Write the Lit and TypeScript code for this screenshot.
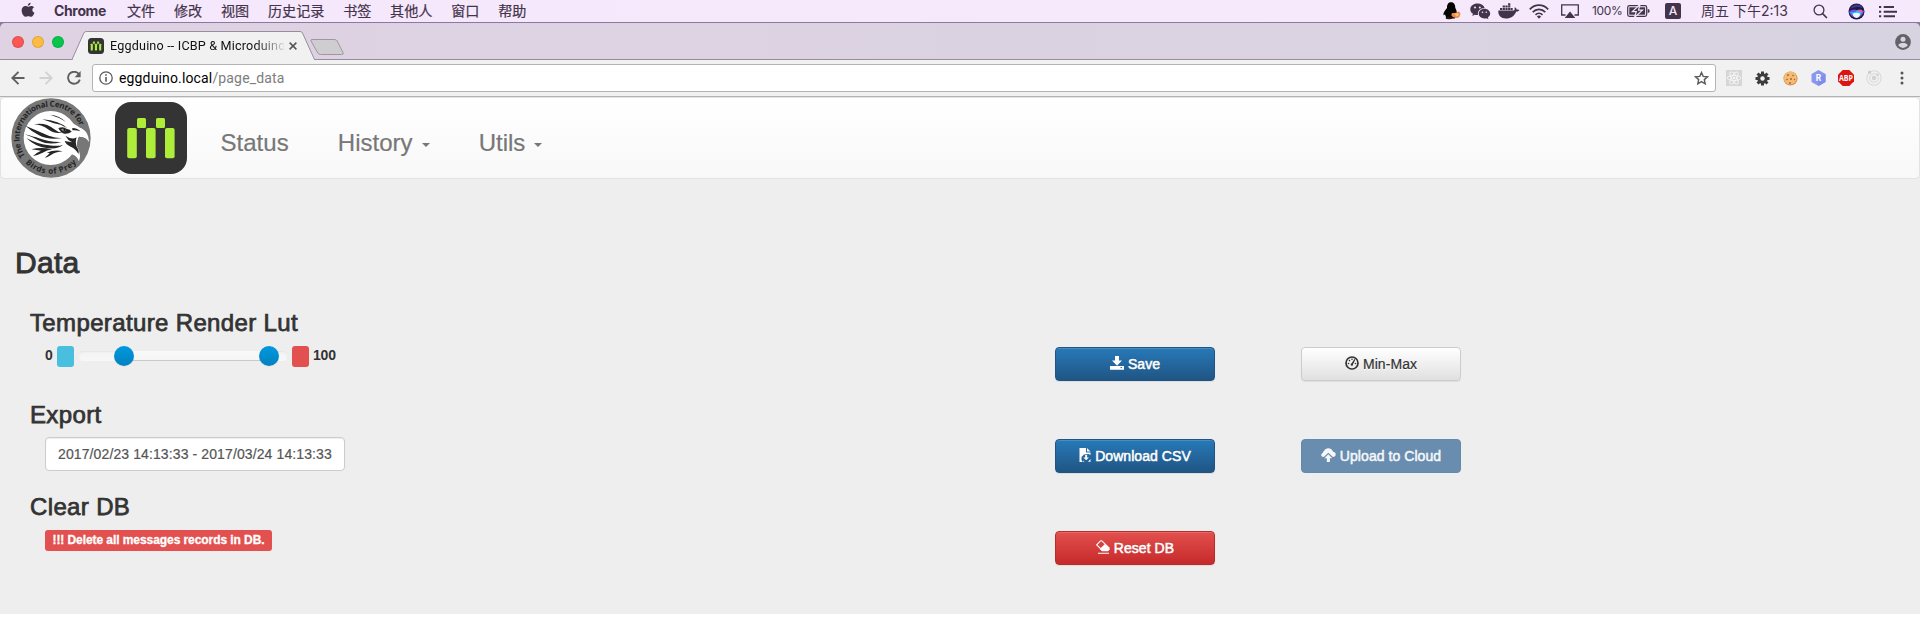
import { LitElement, html, css, svg } from "lit";
import { customElement } from "lit/decorators.js";

const apple = svg`<svg width="14" height="17" viewBox="0 0 13 17" preserveAspectRatio="none"><path fill="#43344b" d="M8.900.8c.1 1.700-1.200 3-2.600 3C6.200 2.200 7.400 1 8.900.8zM6.600 4.700c.7 0 1.500-.8 2.800-.8 1 0 2 .5 2.700 1.400-2.300 1.500-1.900 4.500.4 5.500-.6 1.900-1.900 4-3.200 4-.9 0-1.300-.6-2.500-.6s-1.700.6-2.500.6C2.500 14.800.6 11.500.6 8.600c0-3 1.700-4.600 3.500-4.600 1.100 0 1.900.7 2.500.7z"/></svg>`;

const penguin = svg`<svg width="18" height="18" viewBox="0 0 18 18"><path fill="#050505" d="M4 6C4 2 5.500.3 8 .3S12.300 2 12.300 6c1.300 2 1.600 4 1.500 6l-2 4.500H3.500L2 12.500l-1.600.8C.2 10.300 2 8.500 4 6z"/><ellipse cx="6" cy="16" rx="3.300" ry="1.200" fill="#26170c"/><path fill="#ed8a43" d="M9 11q4 .4 7-1.800l1.500 2.500q-.5 3.500-3 4.300l-4.500-.8-1.700-2z"/><path fill="#f9bd80" d="M11 12l4-1 1 2-2 1.500z"/></svg>`;

const wechat = svg`<svg width="21" height="17" viewBox="0 0 21 17"><g fill="#43344b"><path d="M7.500.5C3.300.5.300 3 .300 6.200c0 2 1 3.500 2.700 4.600l-.7 2.200 2.500-1.300c1 .3 2 .4 3.200.3-.8-4 2.200-7 6.600-7C13.800 2.200 11 .5 7.500.5z"/><path d="M14.400 5.700c-3.300 0-5.700 2.200-5.700 4.900 0 2.800 2.500 4.900 5.700 4.900.8 0 1.400-.1 2-.3l2.100 1.100-.6-1.800c1.400-1 2.300-2.300 2.300-3.900 0-2.700-2.500-4.900-5.800-4.900z"/></g><g fill="#f4e8fa"><circle cx="5" cy="4.500" r="1"/><circle cx="9.800" cy="4.500" r="1"/><circle cx="12.500" cy="9.300" r=".8"/><circle cx="16.300" cy="9.300" r=".8"/></g></svg>`;

const docker = svg`<svg width="22" height="16" viewBox="0 0 22 16"><g fill="#43344b"><path d="M.3 7.600h15.400c.9-.2 1.300-1 .8-2.600l.5-.8c1 .7 1.600 1.500 1.700 2.400 1-.2 2 0 2.700.4-.6 1.200-1.700 1.700-3.300 1.700C16.500 12.800 13 15.500 8 15.500 3 15.500 0 13 .3 7.600z"/><path d="M2 5h2.200v2H2zM4.700 5h2.200v2H4.700zM7.400 5h2.200v2H7.400zM10.100 5h2.200v2h-2.200zM12.700 5h2v2h-2zM4.700 2.600h2.200v2H4.700zM7.400 2.600h2.200v2H7.400zM10.100 2.600h2.200v2h-2.200zM10.100.2h2.200v2h-2.200z"/></g></svg>`;

const wifi = svg`<svg width="20" height="15" viewBox="0 0 20 15"><g fill="none" stroke="#43344b" stroke-width="1.700"><path d="M.8 5.300C6-.3 14-.3 19.200 5.300M3.700 8.100c3.600-3.700 9-3.700 12.600 0M6.500 10.900c2-2 5-2 7 0"/></g><path fill="#43344b" d="M7.900 12.500q2.100-1.800 4.200 0L10 14.700z"/></svg>`;

const airplay = svg`<svg width="18" height="15" viewBox="0 0 18 15"><path fill="none" stroke="#43344b" stroke-width="1.300" d="M4.500 11H.7V.8h16.600V11h-3.800"/><path fill="#43344b" d="M9 7.500l5.300 6.600H3.700z"/></svg>`;

const battery = svg`<svg width="23" height="14" viewBox="0 0 23 14"><rect x=".7" y="1.700" width="19" height="10.600" rx="1.800" fill="none" stroke="#43344b" stroke-width="1.200"/><rect x="2.300" y="3.300" width="15.800" height="7.400" fill="#43344b"/><path fill="#43344b" d="M20.700 5q2 0 2 2t-2 2z"/><path fill="#43344b" stroke="#f4e8fa" stroke-width="1.200" d="M13 .5L5.300 7.600h4L7.500 13.500l8-7.300h-4z"/></svg>`;

const glass = svg`<svg width="15" height="15" viewBox="0 0 15 15"><circle cx="6" cy="6" r="4.900" fill="none" stroke="#43344b" stroke-width="1.300"/><path d="M9.600 9.600l4.300 4.400" stroke="#43344b" stroke-width="1.600"/></svg>`;

const siri = svg`<svg width="17" height="17" viewBox="0 0 17 17"><circle cx="8.500" cy="8.500" r="8" fill="#1f1a3c"/><path d="M2.200 6Q4 1.500 9 1.500T14.500 5Q9 2.500 2.200 6z" fill="#3a3790"/><path d="M1 8.500q4-3 8-1.500t7 .5q-1 6-7 7.500Q2.500 15 1 8.500z" fill="#6a54e6"/><path d="M2 9.500q4 0 6-1 2-2.500 6.500.5-1 2-3.500 2-5 2-9-1.500z" fill="#25c6f3"/><path d="M9.500 7q3-1.200 5.500 1l-3 1.500z" fill="#ff4fae"/><path d="M4.500 11q4-2.500 8 0-1 3.500-4 4-3-.5-4-4z" fill="#eef6ff"/></svg>`;

const list = svg`<svg width="18" height="13" viewBox="0 0 18 13"><path fill="#43344b" d="M0 1h2.200v2H0zM0 5.700h2.200v2H0zM0 10.200h2.200v2H0zM4.700 1H15v2H4.700zM4.700 5.700H18v2H4.700zM4.700 10.200H16v2H4.700z"/></svg>`;

const person = svg`<svg width="16" height="16" viewBox="0 0 16 16"><circle cx="8" cy="8" r="7.900" fill="#646168"/><circle cx="8" cy="5.300" r="2.500" fill="#dad3e0"/><path d="M3.200 11.300C3.600 9.500 6 9 8 9s4.400.5 4.800 2.300Q11 14 8 14t-4.800-2.700z" fill="#dad3e0"/></svg>`;

const arrow = (color: string) => svg`<svg width="14" height="14" viewBox="0 0 14 14"><path fill="none" stroke="${color}" stroke-width="1.900" d="M13.500 7H1.800M7.500.8L1.300 7l6.200 6.200"/></svg>`;

const reload = svg`<svg width="14" height="14" viewBox="0 0 14 14"><path fill="none" stroke="#5f5f5f" stroke-width="1.900" d="M12 3.300A6 6 0 1 0 12.800 8.600"/><path fill="#5f5f5f" d="M13.600 0v6.200H7.600z"/></svg>`;

const info = svg`<svg width="14" height="14" viewBox="0 0 14 14"><circle cx="7" cy="7" r="6.200" fill="none" stroke="#5a5a5a" stroke-width="1.300"/><path fill="#5a5a5a" d="M6.200 3.200h1.600v1.600H6.200zM6.200 6h1.600v4.700H6.200z"/></svg>`;

const star = svg`<svg width="15" height="14" viewBox="0 0 15 14"><path fill="none" stroke="#5a5a5a" stroke-width="1.400" stroke-linejoin="miter" d="M7.500 1.500l1.700 3.900 4.300.4-3.200 2.800.9 4.200-3.700-2.200-3.700 2.200.9-4.200L1.500 5.800l4.300-.4z"/></svg>`;

const react = svg`<svg width="16" height="16" viewBox="0 0 16 16"><rect width="16" height="16" fill="#d6d6d6"/><g fill="none" stroke="#f5f5f5" stroke-width=".9"><ellipse cx="8" cy="8" rx="6.800" ry="2.600"/><ellipse cx="8" cy="8" rx="6.800" ry="2.600" transform="rotate(60 8 8)"/><ellipse cx="8" cy="8" rx="6.800" ry="2.600" transform="rotate(120 8 8)"/></g><circle cx="8" cy="8" r="1.300" fill="#f5f5f5"/></svg>`;

const gear = svg`<svg width="15" height="15" viewBox="-7.500 -7.500 15 15"><g fill="#3c3c3c">${[0, 45, 90, 135].map((a) => svg`<rect x="-1.500" y="-7" width="3" height="14" transform="rotate(${a})"/>`)}<circle r="5.200"/></g><circle r="2.200" fill="#f1f1f1"/></svg>`;

const cookie = svg`<svg width="15" height="15" viewBox="0 0 15 15"><circle cx="7.500" cy="7.500" r="7.100" fill="#d9974a"/><circle cx="7.300" cy="6.900" r="6.400" fill="#f3bb73"/><g fill="#9a622e"><circle cx="5" cy="4" r=".9"/><circle cx="10" cy="4.500" r=".8"/><circle cx="4" cy="8.500" r=".8"/><circle cx="8" cy="8" r=".9"/><circle cx="11.500" cy="8.500" r=".7"/><circle cx="7" cy="12" r=".9"/></g></svg>`;

const hexR = svg`<svg width="15" height="16" viewBox="0 0 15 16"><path d="M7.500 0l7 4v8l-7 4-7-4V4z" fill="#8b97ef"/><path d="M7.500 8l7-4v8l-7 4z" fill="#7f8cec"/><text x="7.500" y="11" text-anchor="middle" font-family="Roboto, sans-serif" font-weight="700" font-size="8.500" fill="#fff">R</text></svg>`;

const abp = svg`<svg width="16" height="16" viewBox="0 0 16 16"><path d="M4.700 0h6.600L16 4.700v6.600L11.300 16H4.700L0 11.300V4.700z" fill="#dc1512"/><text x="8" y="10.800" text-anchor="middle" textLength="14" lengthAdjust="spacingAndGlyphs" font-family="Open Sans, sans-serif" font-weight="700" font-size="8" fill="#fff">ABP</text></svg>`;

const orbit = svg`<svg width="16" height="16" viewBox="0 0 16 16"><g fill="none" stroke="#dadada" stroke-width="1.100"><circle cx="8" cy="8" r="7.200"/><circle cx="8" cy="8" r="4.300"/></g><circle cx="8" cy="8" r="2.200" fill="#d2d2d2"/><circle cx="3.500" cy="2.300" r="1.500" fill="#c8c8c8"/><circle cx="11.500" cy="4.800" r="1.200" fill="#d0d0d0"/></svg>`;

const dots = svg`<svg width="4" height="14" viewBox="0 0 4 14"><g fill="#555"><circle cx="2" cy="2" r="1.500"/><circle cx="2" cy="7" r="1.500"/><circle cx="2" cy="12" r="1.500"/></g></svg>`;

const mLogo = (size: number) => svg`<svg width="${size}" height="${size}" viewBox="0 0 72 72"><rect width="72" height="72" rx="16" fill="#343434"/><g fill="#aeee3a"><rect x="12.200" y="26" width="9.600" height="30.300" rx="2"/><rect x="31" y="26" width="9.600" height="30.300" rx="2"/><rect x="50" y="26" width="9.600" height="30.300" rx="2"/><rect x="22" y="16" width="9" height="10" rx="1.500"/><rect x="41" y="16" width="9" height="10" rx="1.500"/></g></svg>`;

const eagle = svg`<svg width="80" height="80" viewBox="9 6 240 240">
  <defs>
    <path id="arcTop" d="M51.900 179.800A94 94 0 1 1 222 114"/>
    <path id="arcBottom" d="M35 178A107.500 107.500 0 0 0 223 178"/>
  </defs>
  <circle cx="129" cy="126" r="119" fill="#777"/>
  <circle cx="128" cy="126" r="81" fill="#fff"/>
  <path fill="#fff" d="M150 70C185 74 202 86 216 95 232 101 242 113 243 138 238 128 229 123 213 122 208 130 205 142 208 153 216 161 220 178 213 196 207 181 198 176 180 172L120 160Z"/>
  <path fill="#777" d="M213 122q10 0 20 6v45l-18 18q4-18-7-38-3-12 5-31z"/>
  <g fill="#252525">
    <path d="M126 56q29 3 48 22-21-15-48-22z"/>
    <path d="M103 70q52 4 75 27-20-13-40-15-12-4-35-12z"/>
    <path d="M78 85q34-7 60 14 11 10 25 11-26 4-43-10-17-14-42-15z"/>
    <path d="M52 89q45 19 70 30 18 6 40 8-45 5-69-9-25-14-41-29z"/>
    <path d="M50 115q28 7 43 12 30 12 67 11-37 11-65-3-20-12-45-20z"/>
    <path d="M55 126q37 20 68 22 30 4 42-2-16 15-50 10-33-4-60-30z"/>
    <path d="M70 160q30-8 62 0-15 2-28 10-14 7-29 10 12-11 24-16-13-2-29-4z"/>
    <path d="M116 170q25-11 48-4-22 2-35 11-11 8-19 8 10-6 15-14z"/>
    <path d="M151 96q16-6 24 2 12 2 16 9-9 7-22 6-12-3-18-17z"/>
    <path d="M193 96q17 1 24 10-13-5-24-3z"/>
    <path d="M172 119q20 14 34 5-5 12 0 28 9 13 5 22-7-15-23-22-14-6-18-17l22 4q-13-7-20-20z"/>
  </g>
  <path d="M159 99q10-3 15 4-7 8-15-4z" fill="#999"/><circle cx="169" cy="102" r="3" fill="#111"/>
  <g font-family="Open Sans, sans-serif" font-weight="700" fill="#242424">
    <text font-size="24"><textPath href="#arcTop" textLength="316" lengthAdjust="spacing">The International Centre for</textPath></text>
    <text font-size="24"><textPath href="#arcBottom" startOffset="28" textLength="172" lengthAdjust="spacing">Birds of Prey</textPath></text>
  </g>
</svg>`;

const save = svg`<svg width="14" height="14" viewBox="0 0 14 14"><path fill="currentColor" d="M5 0h4v4.500h3L7 9.800 2 4.500h3zM0 10h14v3.700H0z"/><path d="M10.500 11.600h1.500" stroke="#22659b"/></svg>`;

const dash = svg`<svg width="14" height="14" viewBox="0 0 14 14"><circle cx="7" cy="7" r="6" fill="none" stroke="currentColor" stroke-width="1.700"/><g fill="currentColor"><circle cx="3.500" cy="7.500" r=".8"/><circle cx="4.500" cy="4.600" r=".8"/><circle cx="7" cy="3.300" r=".8"/><circle cx="10.500" cy="7.500" r=".8"/><path d="M9.500 3l.9.500L8 8.200a1.200 1.200 0 1 1-1.600-.8z"/></g></svg>`;

const saveFile = svg`<svg width="12" height="14" viewBox="0 0 12 14"><path fill="currentColor" d="M.5 0H7v4.500h4.500V7L9.500 6 5 6.500 2.500 9v3l1.200 2H.5z"/><path fill="currentColor" d="M8 0l3.500 3.600H8zM6.200 7h1.900v2.500h1.900L7.200 12.300 4.300 9.500h1.900zM4 12.500l1.500 1.200H4zM11.500 11v2.800H9z"/></svg>`;

const cloud = svg`<svg width="15" height="14" viewBox="0 0 15 14"><path fill="currentColor" d="M2.800 9L7.300 4.800 11.900 9c1.700-.1 2.800-1.200 2.800-2.600 0-1.500-1.200-2.700-2.700-2.600C11.500 1.700 9.500.3 7.400.3c-2 0-3.600 1-4.300 2.800C2.200 3.400 2 4 2 4.700.9 5.100.2 6 .2 7 .2 8.200 1.300 9.100 2.800 9z"/><path fill="currentColor" d="M7.300 6.300l4 4H8.900V14H5.800v-3.700H3.400z"/></svg>`;

const erase = svg`<svg width="14" height="14" viewBox="0 0 14 14"><path fill="none" stroke="currentColor" stroke-width="1.100" d="M4.800.7L.7 4.800 6.500 10.500h4L13.200 8 5.700.7z"/><path fill="currentColor" d="M8.700 4.200l5.300 5-2 2H6L3.700 9zM2 12.700h11v1.100H2z"/></svg>`;

@customElement("mac-menubar")
class MacMenubar extends LitElement {
  static styles = css`
    :host { display: flex; box-sizing: border-box; height: 23px; align-items: center; background: linear-gradient(90deg, #f6e8fc, #f5e9fb); border-bottom: 1px solid #8d78a3; color: #43344b; font: 14px/22px Inter, "Noto Sans CJK SC", sans-serif; white-space: nowrap; }
    svg { display: block; }
    :host > div, .status > div { flex: none; }
    .apple { margin: -2px 0 0 21px; width: 33px; }
    .app { font-weight: 700; width: 73px; letter-spacing: -.35px; }
    :host > .menus { display: flex; gap: 18.800px; flex: 1; font-size: 14.100px; -webkit-text-stroke: .2px; }
    .status { display: flex; align-items: center; }
    .penguin { width: 27px; } .wechat { width: 28px; } .docker { width: 31px; } .wifi { width: 32px; } .airplay { width: 31px; }
    .pct { width: 35px; font-size: 12px; letter-spacing: -.3px; }
    .battery { width: 38px; }
    .input { width: 16px; height: 16px; margin-right: 20px; border-radius: 2px; background: #43344b; color: #f4e8fa; font-size: 12px; font-weight: 500; line-height: 16px; text-align: center; }
    .clock { width: 112px; }
    .glass { width: 35px; } .siri { width: 31px; } .list { width: 41px; }
  `;
  render() {
    return html`<div class="apple">${apple}</div><div class="app">Chrome</div>
      <div class="menus">${["文件", "修改", "视图", "历史记录", "书签", "其他人", "窗口", "帮助"].map((m) => html`<span>${m}</span>`)}</div>
      <div class="status">
        <div class="penguin">${penguin}</div><div class="wechat">${wechat}</div><div class="docker">${docker}</div><div class="wifi">${wifi}</div><div class="airplay">${airplay}</div>
        <div class="pct">100%</div><div class="battery">${battery}</div><div class="input">A</div>
        <div class="clock">周五 下午2:13</div>
        <div class="glass">${glass}</div><div class="siri">${siri}</div><div class="list">${list}</div>
      </div>`;
  }
}

@customElement("browser-chrome")
class BrowserChrome extends LitElement {
  static styles = css`
    :host { display: block; font-family: Roboto, sans-serif; background: #8d78a3; }
    svg { display: block; flex: none; }
    .strip { display: flex; box-sizing: border-box; height: 37px; border-bottom: 1px solid #978d9e; border-radius: 5px 5px 0 0; background: linear-gradient(90deg, #dfd2e2, #d8d3e1); }
    .lights { display: flex; flex: none; box-sizing: border-box; gap: 8px; padding: 13px 0 0 12px; width: 72px; }
    .light { width: 12px; height: 12px; border-radius: 50%; box-sizing: border-box; border: .5px solid rgba(0,0,0,.12); flex: none; }
    .red { background: #fc5753; } .yellow { background: #fdbc40; } .green { background: #06c74c; }
    .tab { position: relative; flex: none; width: 244px; height: 37px; display: flex; align-items: center; padding: 9px 0 0 16px; box-sizing: border-box; }
    .shape { position: absolute; left: 0; top: 0; }
    .fav, .title, .close { position: relative; flex: none; }
    .title { width: 174px; margin-left: 6px; overflow: hidden; white-space: nowrap; font-size: 12.600px; line-height: 16px; color: #111; letter-spacing: .18px; -webkit-mask-image: linear-gradient(90deg, #000 145px, transparent 177px); }
    .close { margin-left: 5px; }
    .new { margin: 16px auto 0 -6px; }
    .person { padding: 11px 9px 0 0; }
    .toolbar { display: flex; align-items: center; box-sizing: border-box; height: 37px; background: #f1f1f1; border-bottom: 1px solid #b2b4b2; }
    .toolbar > div { flex: none; }
    .back { margin-left: 11px; width: 28px; } .fwd { width: 28px; transform-origin: 7px 7px; transform: scaleX(-1); } .reload { width: 25px; }
    .omni { display: flex; align-items: center; box-sizing: border-box; width: 1624px; height: 28px; padding: 0 6px; border: 1px solid #b3b4b3; border-radius: 3px; background: #fff; }
    .url { flex: 1; margin-left: 6px; font-size: 14px; line-height: 20px; color: #7d7d7d; letter-spacing: .150px; }
    .host { color: #000; }
    .exts { display: flex; align-items: center; margin-left: 4px; }
    .ext { width: 28px; display: flex; justify-content: center; }
  `;
  render() {
    return html`<div class="strip">
        <div class="lights"><span class="light red"></span><span class="light yellow"></span><span class="light green"></span></div>
        <div class="tab">
          <svg class="shape" width="244" height="37" viewBox="0 0 244 37"><path fill="#f2f1f2" stroke="#978d9e" d="M0 36.500L11.800 10q.8-1.500 2.500-1.500H228q1.700 0 2.500 1.500L242.500 36.500"/><path d="M1 36.500h241" stroke="#f2f1f2"/></svg>
          <span class="fav">${mLogo(16)}</span><span class="title">Eggduino -- ICBP &amp; Microduino</span>
          <svg class="close" width="8" height="8" viewBox="0 0 8 8"><path stroke="#555" stroke-width="1.500" d="M.6.6l6.800 6.800M7.400.6L.6 7.400"/></svg>
        </div>
        <svg class="new" width="35" height="17" viewBox="0 0 35 17"><path fill="#cfcdcf" stroke="#9f97a4" d="M2 .5h22.500q2 0 2.700 1.500l6 12q.6 1.500-1.500 1.500H10.500q-2 0-2.700-1.500L1 2Q.4.5 2 .5z"/></svg>
        <div class="person">${person}</div>
      </div>
      <div class="toolbar">
        <div class="back">${arrow("#5f5f5f")}</div><div class="fwd">${arrow("#d2d2d2")}</div><div class="reload">${reload}</div>
        <div class="omni">${info}<div class="url"><span class="host">eggduino.local</span>/page_data</div>${star}</div>
        <div class="exts">${[react, gear, cookie, hexR, abp, orbit, dots].map((i) => html`<div class="ext">${i}</div>`)}</div>
      </div>`;
  }
}

@customElement("site-nav")
class SiteNav extends LitElement {
  static styles = css`
    :host { display: flex; box-sizing: border-box; height: 82px; border: 1px solid #e3e3e3; border-radius: 4px; background: linear-gradient(#fff, #f8f8f8); color: #777; font: 24px/27px "Liberation Sans", sans-serif; }
    svg { display: block; }
    .brand { flex: none; padding: 0 0 0 10px; width: 114px; box-sizing: border-box; }
    .logo { flex: none; padding-top: 4px; width: 81px; }
    .link { padding: 31px 24.600px 0; display: flex; text-shadow: 0 1px 0 rgba(255,255,255,.25); -webkit-text-stroke: .2px; }
    .caret { margin: 14px 0 0 9px; width: 0; height: 0; border: 4px solid transparent; border-top-color: #777; border-bottom: 0; }
  `;
  render() {
    return html`<div class="brand">${eagle}</div><div class="logo">${mLogo(72)}</div>
      <div class="link">Status</div><div class="link">History<i class="caret"></i></div><div class="link">Utils<i class="caret"></i></div>`;
  }
}

@customElement("app-root")
class AppRoot extends LitElement {
  static styles = css`
    :host { display: block; height: 621px; overflow: hidden; background: #fff; color: #333; font: 14px/20px "Liberation Sans", sans-serif; }
    .page { background: #eee; height: 517px; }
    h2, h3 { margin: 0; font-weight: 400; white-space: nowrap; }
    h2 { padding: 67px 0 0 15px; font-size: 30px; line-height: 33px; letter-spacing: .3px; -webkit-text-stroke: .9px; }
    .rows { display: grid; grid-template-columns: 1025px 246px 160px; grid-auto-rows: 92px; padding: 31px 0 0 30px; }
    h3 { font-size: 24px; line-height: 26px; letter-spacing: .36px; -webkit-text-stroke: .75px; }
    .field { padding-left: 15px; }
    .lut { display: flex; height: 21px; padding-top: 10px; font-weight: 700; }
    .zero { width: 12px; } .hundred { margin-left: 4px; }
    .zero, .hundred { line-height: 18px; letter-spacing: -.2px; }
    .chip { width: 17px; height: 21px; border-radius: 3px; }
    .cool { background: #48bfde; } .hot { background: #e2514f; }
    .slider { position: relative; width: 208px; height: 10px; margin: 5px 5px 0; border-radius: 4px; background: linear-gradient(#f3f3f3, #f8f8f8); box-shadow: inset 0 1px 2px rgba(0,0,0,.06); }
    .range { position: absolute; left: 45px; width: 145px; top: 0; height: 10px; background: linear-gradient(#f9f9f9, #f5f5f5); box-shadow: inset 0 -1px 0 #c9c9c9; }
    .knob { position: absolute; top: -5px; width: 20px; height: 20px; border-radius: 50%; background: linear-gradient(#0099e0, #0480be); box-shadow: 0 1px 1px rgba(0,0,0,.05); }
    .low { left: 35px; } .high { left: 180px; }
    .date { box-sizing: border-box; width: 300px; height: 34px; margin-top: 9px; padding: 6px 12px; border: 1px solid #ccc; border-radius: 4px; background: #fff; box-shadow: inset 0 1px 1px rgba(0,0,0,.075); color: #555; letter-spacing: .110px; white-space: nowrap; -webkit-text-stroke: .2px; }
    .label { box-sizing: border-box; width: 227px; height: 21px; margin-top: 10px; border-radius: 3px; background: #e2514f; color: #fff; font-weight: 700; font-size: 12px; line-height: 20px; letter-spacing: -.070px; text-align: center; white-space: nowrap; -webkit-text-stroke: .3px; }
    .btn { box-sizing: border-box; display: flex; align-items: center; justify-content: center; gap: 4px; width: 160px; height: 34px; margin-top: 37px; border-radius: 4px; border: 1px solid #204d74; color: #fff; white-space: nowrap; box-shadow: inset 0 1px 0 rgba(255,255,255,.15), 0 1px 1px rgba(0,0,0,.075); text-shadow: 0 -1px 0 rgba(0,0,0,.2); letter-spacing: .060px; -webkit-text-stroke: .5px; }
    .primary { background: linear-gradient(#2779b8, #205584); border-color: #1f5485; }
    .default { background: linear-gradient(#fff, #e0e0e0); border-color: #ccc; color: #333; text-shadow: 0 1px 0 #fff; -webkit-text-stroke: .2px; }
    .faded { background: #688dae; border-color: #6489aa; box-shadow: none; text-shadow: none; color: #f5f7fa; }
    .danger { background: linear-gradient(#e2504e, #c62a2a); border-color: #b92c28; }
    .btn svg { margin-top: -2px; }
  `;
  render() {
    return html`<mac-menubar></mac-menubar><browser-chrome></browser-chrome>
      <div class="page">
        <site-nav></site-nav>
        <h2>Data</h2>
        <div class="rows">
          <div><h3>Temperature Render Lut</h3>
            <div class="field lut"><span class="zero">0</span><span class="chip cool"></span>
              <div class="slider"><i class="range"></i><i class="knob low"></i><i class="knob high"></i></div>
              <span class="chip hot"></span><span class="hundred">100</span></div></div>
          <div class="btn primary">${save}<span>Save</span></div>
          <div class="btn default">${dash}<span>Min-Max</span></div>
          <div><h3>Export</h3><div class="field"><div class="date">2017/02/23 14:13:33 - 2017/03/24 14:13:33</div></div></div>
          <div class="btn primary">${saveFile}<span>Download CSV</span></div>
          <div class="btn faded">${cloud}<span>Upload to Cloud</span></div>
          <div><h3>Clear DB</h3><div class="field"><div class="label">!!! Delete all messages records in DB.</div></div></div>
          <div class="btn danger">${erase}<span>Reset DB</span></div>
        </div>
      </div>`;
  }
}
